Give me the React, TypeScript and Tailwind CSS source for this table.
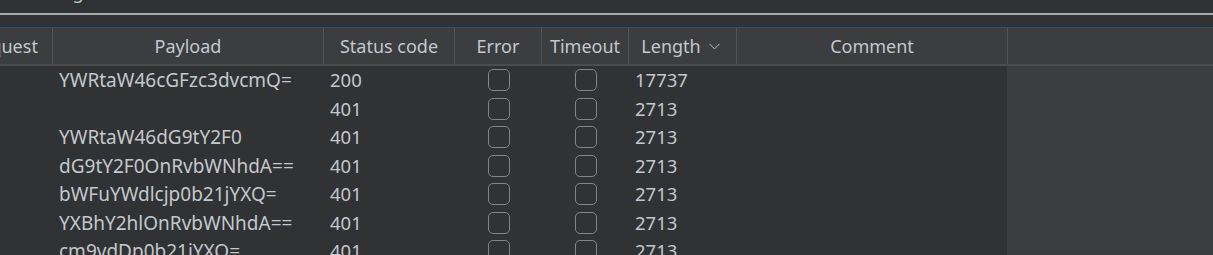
import { ChevronDown } from 'lucide-react'

const rows = [
  { payload: 'YWRtaW46cGFzc3dvcmQ=', status: '200', length: '17737' },
  { payload: '', status: '401', length: '2713' },
  { payload: 'YWRtaW46dG9tY2F0', status: '401', length: '2713' },
  { payload: 'dG9tY2F0OnRvbWNhdA==', status: '401', length: '2713' },
  { payload: 'bWFuYWdlcjp0b21jYXQ=', status: '401', length: '2713' },
  { payload: 'YXBhY2hlOnRvbWNhdA==', status: '401', length: '2713' },
  { payload: 'cm9vdDp0b21jYXQ=', status: '401', length: '2713' },
]

function Checkbox() {
  return <div className="w-[22px] h-[22px] rounded-[5px] border-[1.5px] border-[#858585]" />
}

export default function App() {
  return (
    <div
      className="w-[1213px] h-[255px] overflow-hidden bg-[#313234] text-[#c3c8cd] text-[18px]"
      style={{ fontFamily: '"Noto Sans", "Open Sans", sans-serif' }}
    >
      {/* tab strip remnant */}
      <div className="h-[13px] overflow-hidden relative">
        <div className="absolute left-[11px] top-[-20px] leading-[24px] text-[#c3c8cd]">Showing</div>
      </div>
      <div className="h-[2px] bg-[#a9a9a9]" />
      <div className="h-[12px]" />
      <div className="h-px bg-[#2f4d6b]" />

      {/* header */}
      <div className="flex h-[36px] bg-[#3c3d3f] border-b-2 border-[#4b4c4e] box-content">
        <div className="-ml-[45px] w-[97px] shrink-0 flex items-center justify-center">Request</div>
        <div className="w-[271px] shrink-0 border-l border-[#525355] flex items-center justify-center">Payload</div>
        <div className="w-[131px] shrink-0 border-l border-[#525355] flex items-center justify-center">Status code</div>
        <div className="w-[87px] shrink-0 border-l border-[#525355] flex items-center justify-center">Error</div>
        <div className="w-[87px] shrink-0 border-l border-[#525355] flex items-center justify-center">Timeout</div>
        <div className="w-[108px] shrink-0 border-l border-[#525355] flex items-center justify-center gap-[4px]">
          Length
          <ChevronDown size={19} strokeWidth={1.2} className="mt-[1px]" />
        </div>
        <div className="w-[271px] shrink-0 border-l border-[#525355] flex items-center justify-center">Comment</div>
        <div className="flex-1 border-l border-[#525355]" />
      </div>

      {/* body */}
      <div className="flex h-[200px] text-[18.5px]">
        <div className="w-[1007px] shrink-0 bg-[#313234]">
          {rows.map((r, i) => (
            <div key={i} className="flex h-[28.5px] items-center">
              <div className="w-[52px] shrink-0" />
              <div className="w-[272px] shrink-0 pl-[7px] whitespace-nowrap text-[19px]">{r.payload}</div>
              <div className="w-[131px] shrink-0 pl-[6px]">{r.status}</div>
              <div className="w-[87px] shrink-0 flex justify-center">
                <Checkbox />
              </div>
              <div className="w-[87px] shrink-0 flex justify-center">
                <Checkbox />
              </div>
              <div className="w-[108px] shrink-0 pl-[6px]">{r.length}</div>
              <div className="flex-1" />
            </div>
          ))}
        </div>
        <div className="flex-1 bg-[#3c3d3f]" />
      </div>
    </div>
  )
}
